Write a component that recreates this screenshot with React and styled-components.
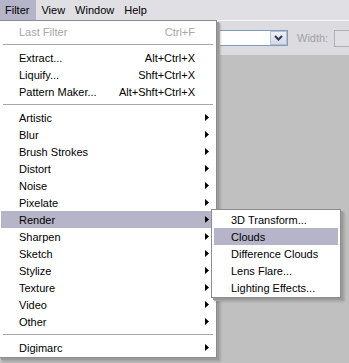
import React from "react"
import styled, { createGlobalStyle } from "styled-components"

const GlobalStyle = createGlobalStyle`
  html, body, #root {
    margin: 0;
    height: 100%;
  }
  body {
    font-family: "Liberation Sans", Arial, sans-serif;
    font-size: 11px;
    color: #000;
    overflow: hidden;
  }
`

const Page = styled.div`
  position: relative;
  display: flex;
  flex-direction: column;
  height: 363px;
  background: #c0c0c0;
`

const MenuBar = styled.div`
  display: flex;
  height: 20px;
  background: #e0dfe3;
`

const MenuTitle = styled.div`
  display: flex;
  align-items: center;
  padding: 0 5px;
  background: ${(p) => (p.active ? "#b6b4c8" : "transparent")};
  &:first-child {
    padding-left: 5px;
    padding-right: 7px;
  }
`

const OptionsBar = styled.div`
  display: flex;
  align-items: center;
  height: 34px;
  padding-left: 150px;
  overflow: hidden;
  background: #dcdbe0;
  border-top: 1px solid #f3f3f5;
  & > * {
    flex-shrink: 0;
  }
`

const Select = styled.div`
  display: flex;
  justify-content: flex-end;
  width: 138px;
  height: 16px;
  box-sizing: border-box;
  border: 1px solid #7f9db9;
  background: #fff;
`

const SelectButton = styled.div`
  display: flex;
  align-items: center;
  justify-content: center;
  width: 17px;
  box-sizing: border-box;
  border: 1px solid #b5bfd6;
  background: linear-gradient(#eef0f6, #d5d9e6);
`

const FieldLabel = styled.span`
  margin-left: 9px;
  color: #a2a1a6;
`

const FieldBox = styled.div`
  margin-left: 6px;
  width: 40px;
  height: 17px;
  box-sizing: border-box;
  border: 1px solid #b0afb4;
  background: #e0dfe3;
`

const Canvas = styled.div`
  flex: 1;
  background: #c0c0c0;
`

const Menu = styled.div`
  position: absolute;
  top: ${(p) => p.top}px;
  left: ${(p) => p.left}px;
  width: ${(p) => p.width}px;
  box-sizing: border-box;
  padding: ${(p) => p.pad};
  background: #fff;
  border: 1px solid #8c8c90;
  box-shadow: 2px 2px 0 #9a9a9a, 3px 3px 1px #a8a8a8, 4px 4px 2px rgba(0, 0, 0, 0.12);
`

const Item = styled.div`
  display: flex;
  align-items: center;
  height: 17px;
  padding: 0 3px 0 ${(p) => p.indent}px;
  white-space: nowrap;
  color: ${(p) => (p.disabled ? "#a7a6aa" : "#000")};
  background: ${(p) => (p.active ? "#b6b4c8" : "transparent")};
`

const Label = styled.span`
  flex: 1;
`

const Shortcut = styled.span`
  margin-right: 14px;
`

const Separator = styled.div`
  height: 1px;
  margin: 4px -1px 4px 2px;
  background: #a6a6a6;
`

const Arrow = () => (
  <svg width="4" height="7" viewBox="0 0 4 7">
    <polygon points="0,0 4,3.5 0,7" fill="#000" />
  </svg>
)

const Chevron = () => (
  <svg width="9" height="6" viewBox="0 0 9 6">
    <polyline points="1,1 4.5,4.5 8,1" fill="none" stroke="#2b3a55" strokeWidth="2" />
  </svg>
)

const filterItems = [
  { label: "Last Filter", shortcut: "Ctrl+F", disabled: true },
  "sep",
  { label: "Extract...", shortcut: "Alt+Ctrl+X" },
  { label: "Liquify...", shortcut: "Shft+Ctrl+X" },
  { label: "Pattern Maker...", shortcut: "Alt+Shft+Ctrl+X" },
  "sep",
  { label: "Artistic", sub: true },
  { label: "Blur", sub: true },
  { label: "Brush Strokes", sub: true },
  { label: "Distort", sub: true },
  { label: "Noise", sub: true },
  { label: "Pixelate", sub: true },
  { label: "Render", sub: true, active: true },
  { label: "Sharpen", sub: true },
  { label: "Sketch", sub: true },
  { label: "Stylize", sub: true },
  { label: "Texture", sub: true },
  { label: "Video", sub: true },
  { label: "Other", sub: true },
  "sep",
  { label: "Digimarc", sub: true },
]

const renderItems = [
  { label: "3D Transform..." },
  { label: "Clouds", active: true },
  { label: "Difference Clouds" },
  { label: "Lens Flare..." },
  { label: "Lighting Effects..." },
]

export default function App() {
  return (
    <Page>
      <GlobalStyle />
      <MenuBar>
        <MenuTitle active>Filter</MenuTitle>
        <MenuTitle>View</MenuTitle>
        <MenuTitle>Window</MenuTitle>
        <MenuTitle>Help</MenuTitle>
      </MenuBar>
      <OptionsBar>
        <Select>
          <SelectButton>
            <Chevron />
          </SelectButton>
        </Select>
        <FieldLabel>Width:</FieldLabel>
        <FieldBox />
      </OptionsBar>
      <Canvas />

      <Menu top={20} left={-1} width={218} pad="2px 4px 1px 1px">
        {filterItems.map((it, i) =>
          it === "sep" ? (
            <Separator key={i} />
          ) : (
            <Item key={i} indent={18} disabled={it.disabled} active={it.active}>
              <Label>{it.label}</Label>
              {it.shortcut && <Shortcut>{it.shortcut}</Shortcut>}
              {it.sub && <Arrow />}
            </Item>
          )
        )}
      </Menu>

      <Menu top={209} left={211} width={130} pad="1px 2px">
        {renderItems.map((it) => (
          <Item key={it.label} indent={17} active={it.active}>
            <Label>{it.label}</Label>
          </Item>
        ))}
      </Menu>
    </Page>
  )
}
